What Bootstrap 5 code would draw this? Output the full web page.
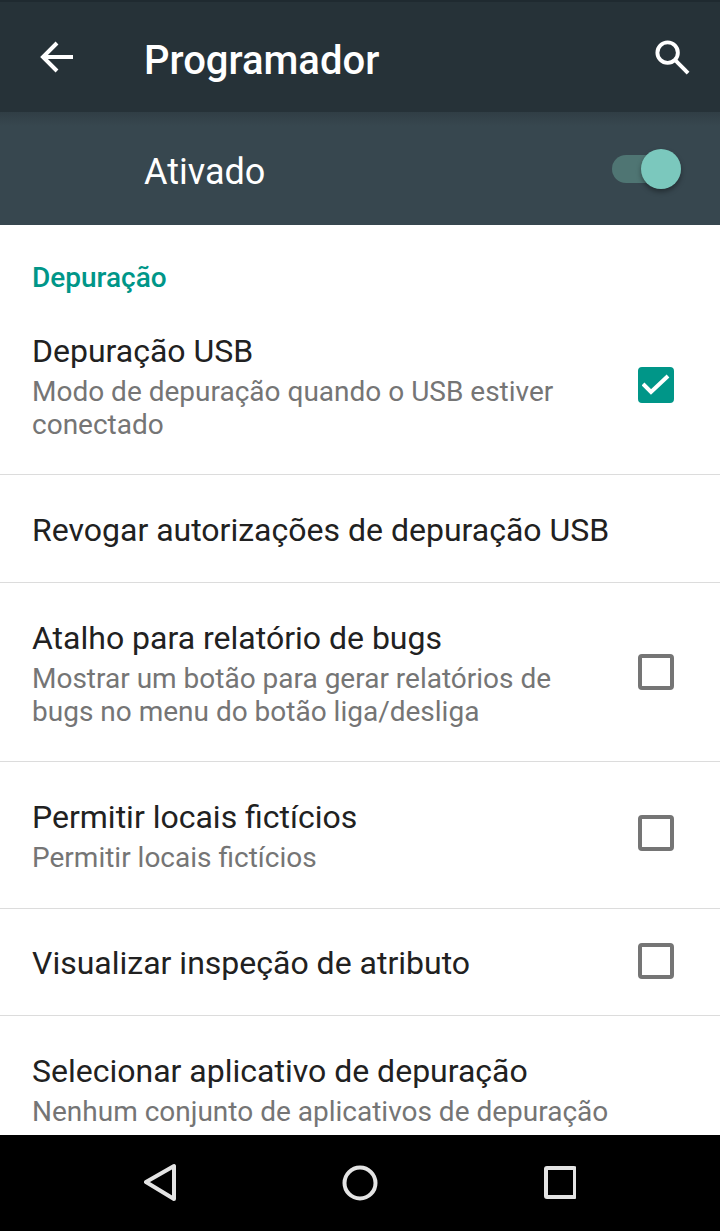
<!DOCTYPE html>
<html lang="pt-BR">
<head>
  <meta charset="UTF-8">
  <title>Programador</title>
  <link href="https://cdn.jsdelivr.net/npm/bootstrap@5.3.0/dist/css/bootstrap.min.css" rel="stylesheet">
  <style>
    html, body { height: 100%; overflow: hidden; }
    body { font-family: Roboto, "Liberation Sans", sans-serif; background: #fff; }
    .screen { height: 1231px; width: 720px; }
    .app-bar { height: 112px; background: #263238; padding: 0 29px 0 40px; border-top: 2px solid #1f2a30; }
    .app-bar h1 { font-size: 40px; font-weight: 500; color: #fff; margin: 0 0 0 70px; flex: 1; line-height: 1; padding-top: 8px; }
    .switch-bar { height: 113px; background: linear-gradient(#303e45 0, #37474f 14px); padding: 6px 39px 0 144px; color: #fff; font-size: 36px; }
    .toggle-track { width: 69px; height: 28px; border-radius: 14px; background: #4f7573; position: relative; margin-top: -6px; }
    .toggle-thumb { position: absolute; width: 40px; height: 40px; border-radius: 50%; background: #7bc8bd; right: 0; top: -6px; box-shadow: 0 3px 5px rgba(0,0,0,.35); }
    .pref-list { flex: 1; min-height: 0; overflow: hidden; }
    .pref-cat { color: #009688; font-size: 28px; font-weight: 500; line-height: 30px; padding: 38px 0 0 32px; height: 91px; margin: 0; }
    .pref-row { border-bottom: 1px solid #dcdcdc; padding: 0 46px 0 32px; }
    .pref-title { font-size: 32px; line-height: 36px; color: #212121; }
    .pref-sub { font-size: 28px; line-height: 33px; color: #757575; margin-top: 6px; }
    .pref-text { width: 560px; }
    .chk { width: 36px; height: 36px; border: 4px solid #757575; border-radius: 4px; flex: none; }
    .chk-on { background: #009688; border-color: #009688; }
    .row-usb { height: 159px; padding-top: 17px; }
    .row-usb .chk { margin-top: 34px; }
    .row-revoke { height: 108px; padding-top: 2px; }
    .row-bugs { height: 179px; padding-top: 37px; }
    .row-bugs .chk { margin-top: 34px; }
    .row-mock { height: 147px; padding-top: 37px; }
    .row-mock .chk { margin-top: 16px; }
    .row-attr { height: 107px; }
    .row-attr .pref-title { padding-top: 2px; }
    .row-attr .chk { margin-bottom: 2px; }
    .row-app { padding: 37px 0 0 32px; }
    .nav-keys { height: 96px; background: #000; flex: none; }
  </style>
</head>
<body>
  <div class="screen d-flex flex-column">
    <div class="app-bar d-flex align-items-center">
      <svg width="34" height="34" viewBox="0 0 34 34" fill="none" stroke="#fff" stroke-width="4"><path d="M33 17H3M17 3 3 17l14 14"/></svg>
      <h1>Programador</h1>
      <svg width="37" height="37" viewBox="0 0 38 38" fill="none" stroke="#fff" stroke-width="4"><circle cx="14" cy="14" r="10.5"/><path d="M22 22l13 13"/></svg>
    </div>
    <div class="switch-bar d-flex align-items-center justify-content-between">
      <span>Ativado</span>
      <div class="toggle-track"><div class="toggle-thumb"></div></div>
    </div>
    <div class="pref-list">
      <p class="pref-cat">Depuração</p>

      <div class="pref-row row-usb d-flex justify-content-between">
        <div class="pref-text">
          <div class="pref-title">Depuração USB</div>
          <div class="pref-sub">Modo de depuração quando o USB estiver conectado</div>
        </div>
        <div class="chk chk-on d-flex align-items-center justify-content-center">
          <svg width="28" height="24" viewBox="0 0 28 24" fill="none" stroke="#fff" stroke-width="4"><path d="M1 11l8 8L26 3"/></svg>
        </div>
      </div>

      <div class="pref-row row-revoke d-flex align-items-center">
        <div class="pref-title">Revogar autorizações de depuração USB</div>
      </div>

      <div class="pref-row row-bugs d-flex justify-content-between">
        <div class="pref-text">
          <div class="pref-title">Atalho para relatório de bugs</div>
          <div class="pref-sub">Mostrar um botão para gerar relatórios de bugs no menu do botão liga/desliga</div>
        </div>
        <div class="chk"></div>
      </div>

      <div class="pref-row row-mock d-flex justify-content-between">
        <div class="pref-text">
          <div class="pref-title">Permitir locais fictícios</div>
          <div class="pref-sub">Permitir locais fictícios</div>
        </div>
        <div class="chk"></div>
      </div>

      <div class="pref-row row-attr d-flex align-items-center justify-content-between">
        <div class="pref-title">Visualizar inspeção de atributo</div>
        <div class="chk"></div>
      </div>

      <div class="row-app">
        <div class="pref-title">Selecionar aplicativo de depuração</div>
        <div class="pref-sub text-nowrap">Nenhum conjunto de aplicativos de depuração</div>
      </div>
    </div>
    <div class="nav-keys d-flex align-items-center justify-content-center">
      <svg width="432" height="40" viewBox="0 0 432 40" fill="none" stroke="#e4e4e4" stroke-width="4" stroke-linejoin="round">
        <path d="M30 3v33L2 19z"/>
        <circle cx="216" cy="20" r="15.5"/>
        <rect x="402" y="5" width="29" height="29" rx="1"/>
      </svg>
    </div>
  </div>
  <script src="https://cdn.jsdelivr.net/npm/bootstrap@5.3.0/dist/js/bootstrap.bundle.min.js"></script>
</body>
</html>
